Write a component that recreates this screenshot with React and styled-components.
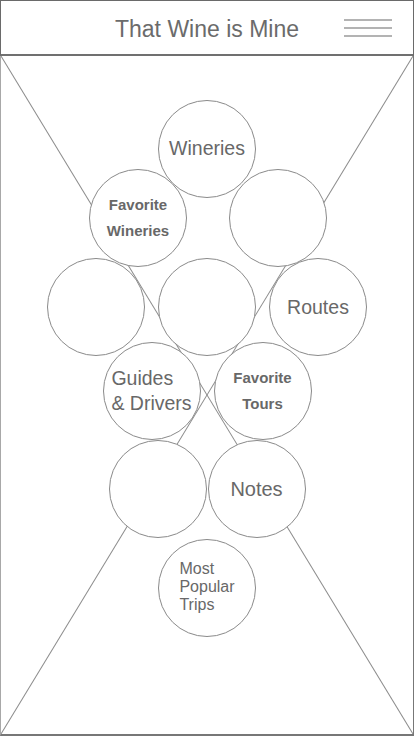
import React from "react";
import styled, { createGlobalStyle } from "styled-components";

const GlobalStyle = createGlobalStyle`
  html, body {
    margin: 0;
    padding: 0;
    background: #fff;
  }
  body {
    font-family: "Liberation Sans", Arial, sans-serif;
    color: #666;
  }
`;

const Screen = styled.div`
  width: 414px;
  height: 736px;
  display: flex;
  flex-direction: column;
  box-sizing: border-box;
  overflow: hidden;
`;

const Header = styled.header`
  height: 56px;
  flex: none;
  box-sizing: border-box;
  border: 1px solid #6a6a6a;
  border-bottom: 2px solid #707070;
  padding-top: 4px;
  display: grid;
  grid-template-columns: 1fr auto 1fr;
  align-items: center;
`;

const Title = styled.h1`
  grid-column: 2;
  margin: 0;
  font-size: 23px;
  font-weight: 400;
  color: #6b6b6b;
  white-space: nowrap;
`;

const Burger = styled.button`
  grid-column: 3;
  justify-self: end;
  margin: -4px 21px 0 0;
  padding: 0;
  width: 48px;
  border: 0;
  background: none;
  display: flex;
  flex-direction: column;
  gap: 6px;

  span {
    display: block;
    height: 2px;
    background: #b3b3b3;
  }
`;

const Canvas = styled.main`
  position: relative;
  flex: 1;
  box-sizing: border-box;
  border-left: 1px solid #a8a8a8;
  border-right: 1px solid #777;
  border-bottom: 2px solid #777;
`;

const Cross = styled.svg`
  position: absolute;
  inset: 0;
  width: 100%;
  height: 100%;
  pointer-events: none;

  line {
    stroke: #8c8c8c;
    stroke-width: 1;
    vector-effect: non-scaling-stroke;
  }
`;

const Cluster = styled.nav`
  position: relative;
  padding-top: 44px;
  display: flex;
  flex-direction: column;
  align-items: center;
`;

const Row = styled.div`
  display: flex;
  gap: ${(p) => p.$gap || 0}px;
  margin-top: ${(p) => p.$overlap || 0}px;
  transform: translateX(${(p) => p.$shift || 0}px);
`;

const Grape = styled.div`
  width: 98px;
  height: 98px;
  box-sizing: border-box;
  border: 1px solid #8a8a8a;
  border-radius: 50%;
  background: #fff;
  display: flex;
  align-items: center;
  justify-content: center;
`;

const Label = styled.div`
  font-size: ${(p) => p.$size || 19.5}px;
  font-weight: ${(p) => (p.$bold ? 700 : 400)};
  line-height: ${(p) => (p.$lh ? `${p.$lh}px` : "normal")};
  text-align: ${(p) => p.$align || "center"};
  color: #686868;
  margin-top: ${(p) => p.$nudge || 0}px;
  white-space: nowrap;
`;

export default function App() {
  return (
    <>
      <GlobalStyle />
      <Screen>
        <Header>
          <Title>That Wine is Mine</Title>
          <Burger aria-label="Menu">
            <span />
            <span />
            <span />
          </Burger>
        </Header>
        <Canvas>
          <Cross viewBox="0 0 100 100" preserveAspectRatio="none">
            <line x1="0" y1="0" x2="100" y2="100" />
            <line x1="100" y1="0" x2="0" y2="100" />
          </Cross>
          <Cluster>
            <Row>
              <Grape>
                <Label $nudge={-2}>Wineries</Label>
              </Grape>
            </Row>
            <Row $gap={42} $overlap={-29} $shift={1}>
              <Grape>
                <Label $bold $size={15} $lh={26} $nudge={-1}>
                  Favorite
                  <br />
                  Wineries
                </Label>
              </Grape>
              <Grape />
            </Row>
            <Row $gap={13} $overlap={-9}>
              <Grape />
              <Grape />
              <Grape>
                <Label>Routes</Label>
              </Grape>
            </Row>
            <Row $gap={13} $overlap={-14}>
              <Grape>
                <Label $align="left" $lh={25}>
                  Guides
                  <br />
                  &amp; Drivers
                </Label>
              </Grape>
              <Grape>
                <Label $bold $size={15} $lh={26}>
                  Favorite
                  <br />
                  Tours
                </Label>
              </Grape>
            </Row>
            <Row $gap={1}>
              <Grape />
              <Grape>
                <Label $size={20}>Notes</Label>
              </Grape>
            </Row>
            <Row $overlap={1}>
              <Grape>
                <Label $align="left" $size={16} $lh={18} $nudge={-3}>
                  Most
                  <br />
                  Popular
                  <br />
                  Trips
                </Label>
              </Grape>
            </Row>
          </Cluster>
        </Canvas>
      </Screen>
    </>
  );
}
